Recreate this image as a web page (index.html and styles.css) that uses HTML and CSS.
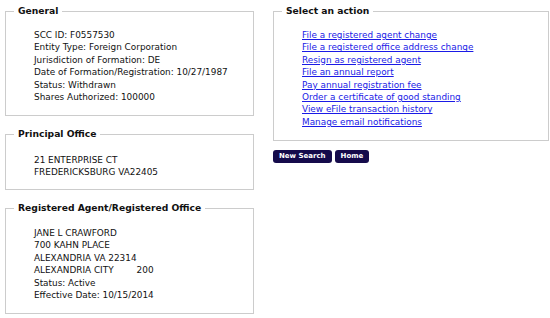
FILE: index.html
```html
<!DOCTYPE html>
<html>
<head>
<meta charset="utf-8">
<link rel="stylesheet" href="styles.css">
</head>
<body>
<div class="page">
  <div class="col left">
    <fieldset class="box general">
      <legend>General</legend>
      <div class="lines">
        <div>SCC ID: F0557530</div>
        <div>Entity Type: Foreign Corporation</div>
        <div>Jurisdiction of Formation: DE</div>
        <div>Date of Formation/Registration: 10/27/1987</div>
        <div>Status: Withdrawn</div>
        <div>Shares Authorized: 100000</div>
      </div>
    </fieldset>
    <fieldset class="box principal">
      <legend>Principal Office</legend>
      <div class="lines">
        <div>21 ENTERPRISE CT</div>
        <div>FREDERICKSBURG VA22405</div>
      </div>
    </fieldset>
    <fieldset class="box agent">
      <legend>Registered Agent/Registered Office</legend>
      <div class="lines">
        <div>JANE L CRAWFORD</div>
        <div>700 KAHN PLACE</div>
        <div>ALEXANDRIA VA 22314</div>
        <div>ALEXANDRIA CITY<span class="code">200</span></div>
        <div>Status: Active</div>
        <div>Effective Date: 10/15/2014</div>
      </div>
    </fieldset>
  </div>
  <div class="col right">
    <fieldset class="box actions">
      <legend>Select an action</legend>
      <div class="lines">
        <div><a href="#">File a registered agent change</a></div>
        <div><a href="#">File a registered office address change</a></div>
        <div><a href="#">Resign as registered agent</a></div>
        <div><a href="#">File an annual report</a></div>
        <div><a href="#">Pay annual registration fee</a></div>
        <div><a href="#">Order a certificate of good standing</a></div>
        <div><a href="#">View eFile transaction history</a></div>
        <div><a href="#">Manage email notifications</a></div>
      </div>
    </fieldset>
    <div class="buttons">
      <button class="btn">New Search</button>
      <button class="btn">Home</button>
    </div>
  </div>
</div>
</body>
</html>
```

FILE: styles.css
```css
html, body {
  margin: 0;
  padding: 0;
  background: #ffffff;
}
body {
  font-family: "DejaVu Sans", Verdana, sans-serif;
  font-size: 8.9px;
  color: #111111;
}
.page {
  display: flex;
  gap: 19px;
  padding: 5px 0 0 5px;
}
.col {
  display: flex;
  flex-direction: column;
}
.left {
  width: 249px;
  gap: 12px;
}
.right {
  width: 276px;
}
.box {
  margin: 0;
  border: 1px solid #cccccc;
  padding: 12px 8px 10px 28px;
  min-width: 0;
  box-sizing: border-box;
}
.box legend {
  font-weight: bold;
  font-size: 9.2px;
  line-height: 12px;
  color: #111111;
  padding: 0 4px;
  margin-left: -20px;
}
.lines {
  line-height: 12.4px;
}
.general { height: 111px; }
.principal { height: 62px; padding-top: 14px; }
.agent { height: 112px; padding-top: 13px; }
.actions { height: 136px; }
.code {
  margin-left: 23px;
}
a {
  color: #1a1ae6;
  text-decoration: underline;
}
.buttons {
  display: flex;
  gap: 3px;
  margin-top: 9px;
}
.btn {
  font-family: "DejaVu Sans", Verdana, sans-serif;
  font-weight: bold;
  font-size: 7px;
  color: #ffffff;
  background: #150b4b;
  border: none;
  border-radius: 3px;
  height: 13px;
  padding: 0 6px;
  line-height: 13px;
}
```
